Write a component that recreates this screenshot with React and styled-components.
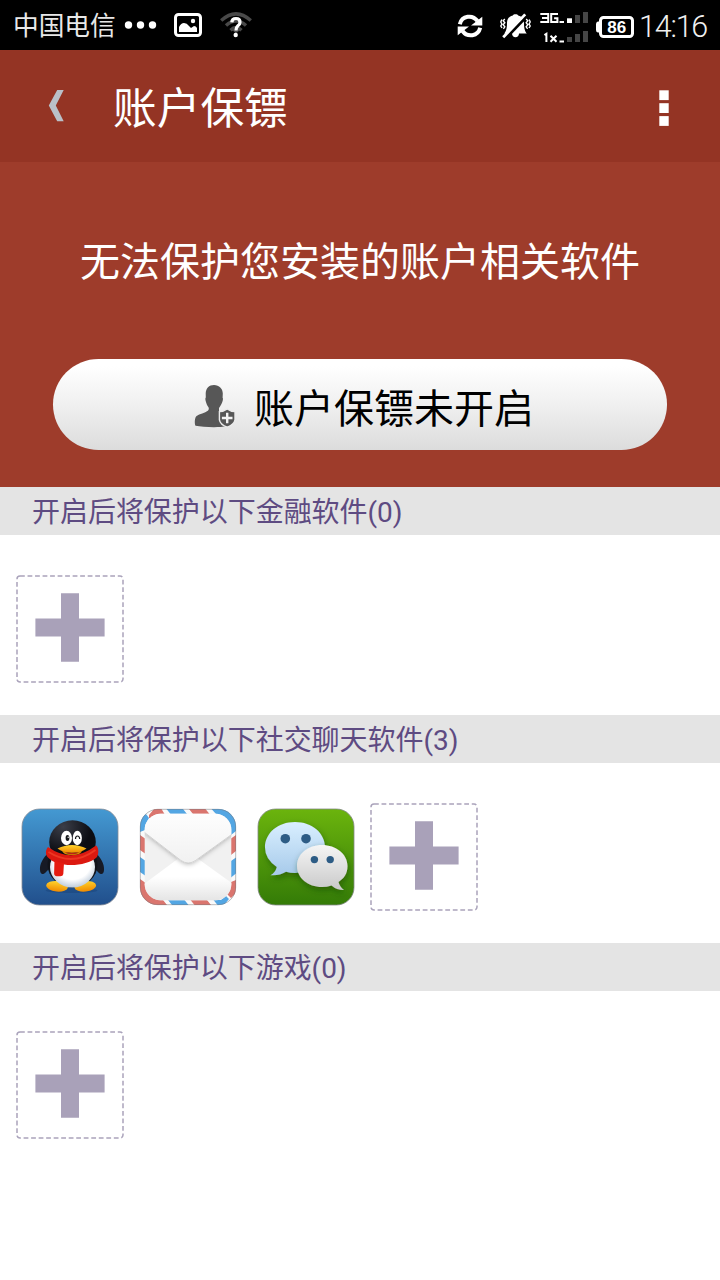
import React from "react";
import styled, { createGlobalStyle } from "styled-components";

const GlobalStyle = createGlobalStyle`
  * { box-sizing: border-box; }
  body { margin: 0; background: #fff; }
  svg { display: block; flex: none; }
`;

const Screen = styled.main`
  width: 720px;
  height: 1280px;
  overflow: hidden;
  display: flex;
  flex-direction: column;
  background: #fff;
  font-family: Roboto, "Noto Sans CJK SC", sans-serif;
`;

const StatusBar = styled.div`
  height: 50px;
  flex: none;
  display: flex;
  align-items: center;
  padding: 0 12px 0 13px;
  background: #000;
  color: #fff;
`;

const Carrier = styled.span`
  width: 111px;
  padding-top: 2px;
  font-size: 25.7px;
  line-height: 48px;
  font-weight: 400;
  color: #e8e8e8;
  white-space: nowrap;
`;

const StatusGroup = styled.div`
  display: flex;
  align-items: center;
  margin-left: ${(p) => (p.$end ? "auto" : "0")};
`;

const StatusIcon = styled.span`
  display: flex;
  margin-left: ${(p) => p.$gap || 0}px;
  margin-top: ${(p) => p.$drop || 0}px;
`;

const Clock = styled.time`
  width: 69px;
  margin-left: 5px;
  padding-top: 4px;
  font-size: 30.5px;
  font-weight: 300;
  line-height: 50px;
  letter-spacing: -1.2px;
  white-space: nowrap;
  color: #f0f0f0;
`;

const TitleBar = styled.header`
  height: 112px;
  flex: none;
  display: flex;
  align-items: center;
  padding: 0 50px 0 48px;
  background: #943424;
`;

const Title = styled.h1`
  flex: 1;
  margin: 0 0 0 48px;
  padding-top: 6px;
  font-size: 43.7px;
  font-weight: 400;
  line-height: 106px;
  color: #fff;
`;

const IconButton = styled.button`
  display: flex;
  padding: ${(p) => p.$drop || 0}px 0 0;
  border: 0;
  background: none;
`;

const Hero = styled.section`
  height: 325px;
  flex: none;
  display: flex;
  flex-direction: column;
  align-items: center;
  background: #9e3c2b;
`;

const Message = styled.p`
  margin: 70px 0 65px;
  font-size: 40px;
  line-height: 62px;
  color: #fff;
  white-space: nowrap;
`;

const ToggleButton = styled.button`
  width: 614px;
  height: 91px;
  display: flex;
  align-items: center;
  padding: 3px 0 0 141px;
  gap: 18px;
  border: 0;
  border-radius: 46px;
  background: linear-gradient(#ffffff 8%, #f0f0f0 50%, #dcdcdc);
  font-family: inherit;
  font-size: 40px;
  line-height: 60px;
  color: #000;
  white-space: nowrap;
`;

const ToggleLabel = styled.span`
  padding-top: 7px;
`;

const SectionTitle = styled.h2`
  height: 48px;
  margin: 0;
  padding: 4px 0 0 32px;
  background: #e4e4e4;
  font-size: 28px;
  font-weight: 400;
  line-height: 44px;
  letter-spacing: -0.04px;
  color: #5e4b82;
`;

const AppRow = styled.div`
  height: 180px;
  display: flex;
  gap: 10px;
  padding: 40px 16px 0;
`;

const AppSlot = styled.div`
  width: 108px;
  height: 108px;
  display: flex;
  align-items: center;
  justify-content: center;
`;

const AddSlot = styled(IconButton)`
  width: 108px;
  height: 108px;
`;

const DotsIcon = () => (
  <svg width="33" height="10" viewBox="0 0 33 10" fill="#fff">
    <circle cx="4.5" cy="5" r="3.7" />
    <circle cx="16.5" cy="5" r="3.7" />
    <circle cx="28.5" cy="5" r="3.7" />
  </svg>
);

const PictureIcon = () => (
  <svg width="28" height="24" viewBox="0 0 28 24">
    <rect x="1.5" y="1.5" width="25" height="21" rx="3" fill="none" stroke="#fff" strokeWidth="3" />
    <circle cx="19" cy="8" r="2.2" fill="#fff" />
    <path d="M5 19v-5q2-4 5-4 3 0 5 3l2 2 3-2q2 0 3 2v4z" fill="#fff" />
  </svg>
);

const WifiUnknownIcon = () => (
  <svg width="32" height="26" viewBox="0 0 32 26" fill="none">
    <g stroke="#494949" strokeWidth="3.4">
      <path d="M1.2 8.6Q16-4.8 30.8 8.6" />
      <path d="M6 13.5Q16 4.5 26 13.5" />
      <path d="M10.5 18.2Q16 13 21.5 18.2" />
    </g>
    <path d="M16 21.5 11 17h10z" fill="#494949" />
    <path d="M11.8 10.3Q12 6.500 16 6.500T20 10.200Q20 12.200 17.900 13.800 16 15.400 16 18.500" stroke="#fff" strokeWidth="3.200" />
    <circle cx="15.700" cy="23" r="2.200" fill="#fff" />
  </svg>
);

const SyncIcon = () => (
  <svg width="26" height="24" viewBox="0 0 26 24" fill="none">
    <path d="M2.800 10.200C5 1.500 15.500.2 20.500 7M23.200 13.800C21 22.500 10.500 23.800 5.500 17" stroke="#fff" strokeWidth="4" />
    <path d="M25.300 2.800V11.400H14zM.7 21.200V12.600H12z" fill="#fff" />
  </svg>
);

const MutedBellIcon = () => (
  <svg width="31" height="26" viewBox="0 0 31 26">
    <path
      d="M15.500 1.200c1.500 0 2.300.4 2.700 1.200 4 1 5.800 3.800 5.800 7.600 0 5.500 1 8.300 2.800 10.500H19c0 2.400-1.500 3.800-3.500 3.800S12 22.900 12 20.500H4.200C6 18.300 7 15.500 7 10c0-3.800 1.800-6.600 5.800-7.600.4-.8 1.200-1.200 2.700-1.200z"
      fill="#fff"
    />
    <path d="M4.500 26.500 28.500 1.500" stroke="#000" strokeWidth="3" />
    <path d="M3.200 24.300 25.200 1.400" stroke="#fff" strokeWidth="2.800" />
    <path
      d="M4.800 6 3.200 7.800l1.600 2-1.600 2 1.600 2-1.400 2M1.800 6.500.8 9l1.100 2-1.100 2 1.200 2M26.200 6l1.600 1.800-1.600 2 1.600 2-1.600 2 1.400 2M29.200 6.500l1 2.500-1.100 2 1.100 2-1.200 2"
      stroke="#fff"
      strokeWidth="1.400"
      fill="none"
    />
  </svg>
);

const SignalIcon = () => (
  <svg width="48" height="34" viewBox="0 0 48 34">
    <g fill="none" stroke="#fff" strokeWidth="2">
      <path d="M.3 2.900h7.900v8.200H.3M2 7h6M18 2.900h-6.800v8.200h6.200V7.200h-3.300M4.400 24l2-1.200V31M10.500 24.800l6 6M16.500 24.800l-6 6" />
    </g>
    <g fill="#fff">
      <rect x="19.500" y="10" width="4.500" height="2" />
      <rect x="19.500" y="29.500" width="4.500" height="2" />
      <rect x="27" y="7.300" width="5" height="4.700" />
    </g>
    <g fill="#454545">
      <rect x="35" y="4" width="5" height="8" />
      <rect x="43" y="1" width="5" height="11" />
      <rect x="27" y="26" width="5" height="5" />
      <rect x="35" y="23" width="5" height="8" />
      <rect x="43" y="20" width="5" height="11" />
    </g>
  </svg>
);

const BatteryIcon = () => (
  <svg width="38" height="22" viewBox="0 0 38 22">
    <rect x="4.500" y="1.500" width="32" height="19" rx="3" fill="none" stroke="#fff" strokeWidth="3" />
    <path d="M4 5.500H1.800Q0 6 0 8v6q0 2 1.800 2.500H4z" fill="#fff" />
    <text x="20.700" y="17" textAnchor="middle" fontFamily="Liberation Sans, sans-serif" fontWeight="700" fontSize="17" fill="#fff">
      86
    </text>
  </svg>
);

const BackIcon = () => (
  <svg width="17" height="32" viewBox="0 0 17 32">
    <path d="M9.200 0h6.500L7.800 15.500 15.700 31.200H9.200L.8 15.500z" fill="#bac0c8" />
  </svg>
);

const MoreIcon = () => (
  <svg width="12" height="38" viewBox="0 0 12 38" fill="#fff">
    <rect x="1.300" y="1.300" width="9.400" height="9.800" />
    <rect x="1.300" y="14.200" width="9.400" height="9.800" />
    <rect x="1.300" y="27.100" width="9.400" height="9.800" />
  </svg>
);

const GuardIcon = () => (
  <svg width="42" height="44" viewBox="0 0 42 44">
    <path
      d="M20 1c5.200 0 8.700 3.600 8.800 8.500l-.2 4.200c.6.3.5 2.200-.4 4.600-.7 2.200-2 4.200-3.200 5.600v3.600c1 1.800 3 3 5 3.800l8 4-5 7c-9 1.400-24 .9-31.500-.6C.4 39.600.6 33.500 2.600 32c3-2.300 8.400-3 11.200-5.300 1.200-1 1.200-2 .7-3.400-1.300-1.800-2-3.300-2.600-5.600-.7-2.200-.7-3.800-.1-4.300l-.1-3.900C11.900 4.400 15 1 20 1z"
      fill="#575757"
    />
    <path d="M33.200 25q3.600 2.700 7.800 2.600v8.200q-.8 4.700-7.800 7.300-7-2.600-7.800-7.300v-8.200q4.200.1 7.800-2.600z" fill="#575757" stroke="#ebebeb" strokeWidth="1.400" />
    <path d="M33.200 28.700v10.600M27.900 34h10.600" stroke="#f4f4f4" strokeWidth="2.400" />
  </svg>
);

const AddIcon = () => (
  <svg width="108" height="108" viewBox="0 0 108 108">
    <rect x="1" y="1" width="106" height="106" rx="3" fill="none" stroke="#aaa3bb" strokeWidth="1.500" strokeDasharray="4.800 2.720" />
    <path d="M45 18.200h18v25.400h25.600v17.800H63v25.400H45V61.400H19.400V43.600H45z" fill="#a9a1b9" />
  </svg>
);

const QQIcon = () => (
  <svg width="98" height="98" viewBox="-1 -1 98 98">
    <defs>
      <linearGradient id="qqSky" x2="0" y2="1">
        <stop stopColor="#4499d2" />
        <stop offset="1" stopColor="#214f8c" />
      </linearGradient>
      <radialGradient id="qqBelly" cx=".5" cy=".4" r=".62">
        <stop offset=".65" stopColor="#fff" />
        <stop offset="1" stopColor="#b9c8d8" />
      </radialGradient>
      <radialGradient id="qqHead" cx=".3" cy=".15" r=".6">
        <stop stopColor="#3b3e48" />
        <stop offset="1" stopColor="#0c0d13" />
      </radialGradient>
      <linearGradient id="qqGold" x2="0" y2="1">
        <stop stopColor="#ffd52d" />
        <stop offset="1" stopColor="#f08a00" />
      </linearGradient>
    </defs>
    <rect x="0" y="0" width="96" height="96" rx="17.500" fill="url(#qqSky)" stroke="#868b96" strokeWidth=".8" />
    <ellipse cx="49.500" cy="81.500" rx="26" ry="2.500" fill="#163c70" opacity=".4" />
    <path d="M27 43c-6 6-9.500 12-9 18 .2 4.500 3 5.500 6 2l8-8zM73 43c6 6 9.500 12 9 18-.2 4.500-3 5.500-6 2l-8-8z" fill="#171a25" />
    <ellipse cx="50.500" cy="55.500" rx="25" ry="23" fill="#11131a" />
    <ellipse cx="35" cy="77.300" rx="10.900" ry="5.300" transform="rotate(6 35 77.300)" fill="url(#qqGold)" />
    <ellipse cx="63.300" cy="77.300" rx="10.900" ry="5.300" transform="rotate(-6 63.300 77.300)" fill="url(#qqGold)" />
    <ellipse cx="50.500" cy="58" rx="22.500" ry="20.500" fill="url(#qqBelly)" />
    <ellipse cx="50.500" cy="33" rx="23.300" ry="21.700" fill="url(#qqHead)" />
    <path d="M26 38q24 17 48-1.500c3 2 3 9 .5 12-10 9-38 11-48.500 0-3-3-2.500-7.500 0-10.500z" fill="#dc1910" />
    <path d="M32.500 51q5 3.500 9.500 3l-.7 11q-.3 2.300-3 2.300h-3.500q-2.800-.3-2.700-3z" fill="#e51b10" />
    <path d="M26.500 43q24 15 47-2" stroke="#f4452b" strokeWidth="2" fill="none" opacity=".7" />
    <ellipse cx="44.500" cy="29" rx="5.500" ry="7.200" fill="#fff" />
    <ellipse cx="55.300" cy="29" rx="4.600" ry="7.200" fill="#fff" />
    <ellipse cx="45.500" cy="29" rx="1.900" ry="2.900" fill="#15171b" />
    <circle cx="46.200" cy="28.300" r=".7" fill="#fff" />
    <path d="M53.500 30q0-3 2-3t2.200 3" fill="none" stroke="#15171b" strokeWidth="1.200" />
    <path d="M40 41.500q10 6 20 0-1 4.500-10 4.500t-10-4.500z" fill="#d58b00" />
    <path d="M43 43q7.500 1.700 14 0-2 2.200-7 2.200t-7-2.200z" fill="#b72218" />
    <path d="M35.500 39.500q7-3.500 14.500-3.500t14.500 3.500q-5 4.200-14.500 4.200t-14.500-4.200z" fill="url(#qqGold)" />
  </svg>
);

const MailIcon = () => (
  <svg width="98" height="98" viewBox="-1 -1 98 98">
    <defs>
      <clipPath id="mailClip"><rect width="96" height="96" rx="17.500" /></clipPath>
      <linearGradient id="mailFlap" x2="0" y2="1">
        <stop stopColor="#fff" />
        <stop offset="1" stopColor="#f1f1f1" />
      </linearGradient>
      <linearGradient id="mailFold" x2="0" y2="1">
        <stop stopColor="#fff" />
        <stop offset=".45" stopColor="#fff" />
        <stop offset="1" stopColor="#e1e1e1" />
      </linearGradient>
      <filter id="flapShade" x="-20%" y="-20%" width="140%" height="150%">
        <feDropShadow dx="0" dy="1.500" stdDeviation="2" floodColor="#000" floodOpacity=".25" />
      </filter>
      <clipPath id="paperClip"><rect x="4.700" y="4.700" width="86.600" height="86.600" rx="16" /></clipPath>
    </defs>
    <g clipPath="url(#mailClip)">
      <rect width="97" height="96" fill="#fafafa" />
      <g fill="#da756e">
        <path d="M9 9V6l5-6h7.500l3 5-8 4zM49 0h16.500l4 5H53zM0 26l5 3.500v15L0 41zM91 29.500l5-3.500v16L91 46zM0 70l5 3.500L23 91l4 5H0zM50.500 91H67l4 5H54.500zM96 71v13l-5 5-5-5 5-11z" />
      </g>
      <g fill="#53a6e3">
        <path d="M26.500 0H43l4 5H30.500zM71.500 0H96v22l-5 4-6-12-9-9zM0 23V9l6-4 3 4-4 8v4zM0 48l5 3.500v15L0 63zM91 52l5-3.500v16L91 68.500zM28 91h16.500l4 5H32zM73.500 91H81l5-4 3 3-5 6h-6.500z" />
      </g>
      <g clipPath="url(#paperClip)">
        <rect x="4" y="4" width="89" height="88" fill="#f1f1f1" />
        <path d="M4 75 39 49q9-7 18 0l36 26v20H4z" fill="url(#mailFold)" />
        <path d="M4 0h89v24.500L55.500 51.500q-7.200 5-14.500 0L4 23z" fill="url(#mailFlap)" filter="url(#flapShade)" />
        <path d="m4 23 37 28.500q7.300 5 14.500 0L93 24.500" fill="none" stroke="#c7c7c7" strokeWidth=".7" />
      </g>
    </g>
    <rect x=".3" y=".3" width="95.400" height="95.400" rx="17.500" fill="none" stroke="#77777b" strokeWidth=".7" opacity=".7" />
  </svg>
);

const WeChatIcon = () => (
  <svg width="98" height="98" viewBox="-1 -1 98 98">
    <defs>
      <linearGradient id="wxGreen" x2="0" y2="1">
        <stop stopColor="#6bb40d" />
        <stop offset="1" stopColor="#347b07" />
      </linearGradient>
      <linearGradient id="wxBlue" x2="0" y2="1">
        <stop stopColor="#d9efff" />
        <stop offset="1" stopColor="#a7caea" />
      </linearGradient>
      <linearGradient id="wxGray" x2="0" y2="1">
        <stop stopColor="#f5f5f5" />
        <stop offset="1" stopColor="#c9c9c9" />
      </linearGradient>
      <filter id="wxShade" x="-20%" y="-20%" width="150%" height="150%">
        <feDropShadow dx="1" dy="3" stdDeviation="3" floodColor="#123e00" floodOpacity=".5" />
      </filter>
    </defs>
    <rect width="96" height="96" rx="17.500" fill="url(#wxGreen)" stroke="#838886" strokeWidth=".8" />
    <path d="M37 13c17 0 30 11 30 25.500S54 64 37 64q-5 0-9-1.200Q21 67 12.500 66.200q5-2.800 6.300-8.200Q7 50 7 38.500C7 24 20 13 37 13z" fill="url(#wxBlue)" filter="url(#wxShade)" />
    <path d="M64 36c14 0 25.500 9 25.500 21 0 7.500-3.500 12.500-9 16q1 4.500 5.500 8-7 .2-12.500-4.600Q69 78 64 78c-14 0-25-9-25-21s11-21 25-21z" fill="url(#wxGray)" filter="url(#wxShade)" />
    <g fill="#2d5c85">
      <circle cx="27.300" cy="29.700" r="4.800" />
      <circle cx="48" cy="29.700" r="4.800" />
      <circle cx="56.400" cy="50.600" r="3.700" />
      <circle cx="72.200" cy="50.600" r="3.700" />
    </g>
  </svg>
);

const sections = [
  { title: "开启后将保护以下金融软件(0)", apps: [] },
  { title: "开启后将保护以下社交聊天软件(3)", apps: [QQIcon, MailIcon, WeChatIcon] },
  { title: "开启后将保护以下游戏(0)", apps: [] },
];

export default function App() {
  return (
    <Screen>
      <GlobalStyle />
      <StatusBar>
        <StatusGroup>
          <Carrier>中国电信</Carrier>
          <StatusIcon><DotsIcon /></StatusIcon>
          <StatusIcon $gap={17}><PictureIcon /></StatusIcon>
          <StatusIcon $gap={18}><WifiUnknownIcon /></StatusIcon>
        </StatusGroup>
        <StatusGroup $end>
          <StatusIcon $drop={1}><SyncIcon /></StatusIcon>
          <StatusIcon $gap={17} $drop={2}><MutedBellIcon /></StatusIcon>
          <StatusIcon $gap={9} $drop={6}><SignalIcon /></StatusIcon>
          <StatusIcon $gap={8} $drop={4}><BatteryIcon /></StatusIcon>
          <Clock>14:16</Clock>
        </StatusGroup>
      </StatusBar>
      <TitleBar>
        <IconButton aria-label="返回"><BackIcon /></IconButton>
        <Title>账户保镖</Title>
        <IconButton aria-label="更多" $drop={4}><MoreIcon /></IconButton>
      </TitleBar>
      <Hero>
        <Message>无法保护您安装的账户相关软件</Message>
        <ToggleButton>
          <GuardIcon />
          <ToggleLabel>账户保镖未开启</ToggleLabel>
        </ToggleButton>
      </Hero>
      {sections.map(({ title, apps }) => (
        <section key={title}>
          <SectionTitle>{title}</SectionTitle>
          <AppRow>
            {apps.map((Icon, i) => (
              <AppSlot key={i}><Icon /></AppSlot>
            ))}
            <AddSlot aria-label="添加"><AddIcon /></AddSlot>
          </AppRow>
        </section>
      ))}
    </Screen>
  );
}
